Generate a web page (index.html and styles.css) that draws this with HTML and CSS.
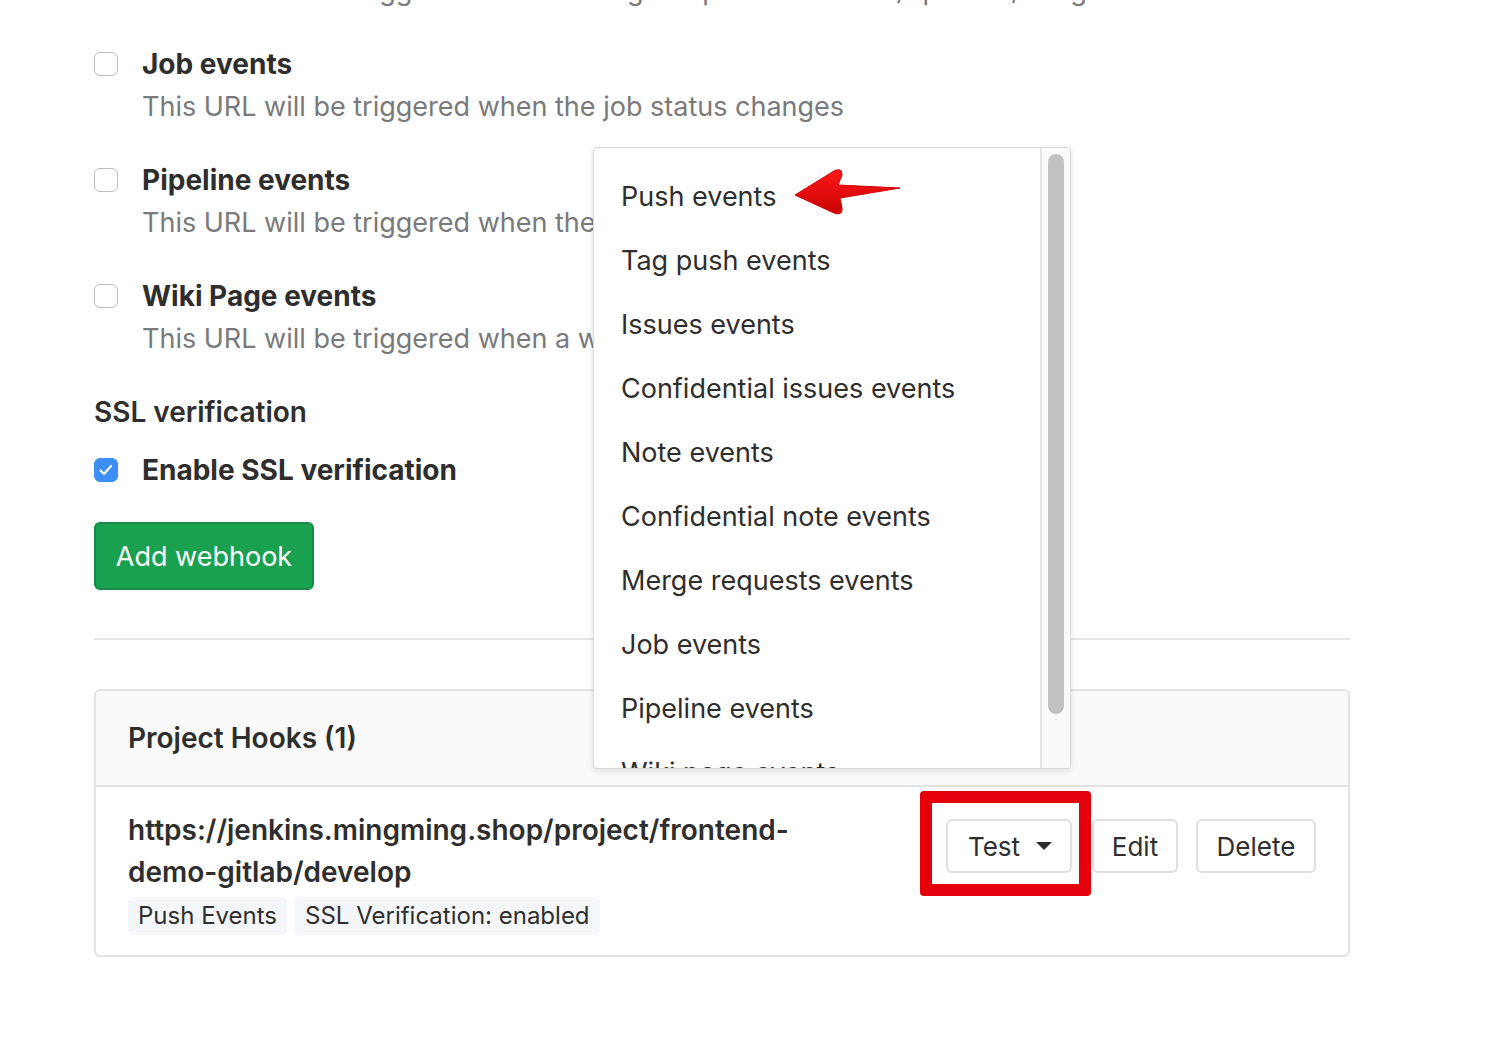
FILE: index.html
```html
<!DOCTYPE html>
<html>
<head>
<meta charset="utf-8">
<link rel="stylesheet" href="styles.css">
</head>
<body>
<div class="page">
  <p class="desc first">This URL will be triggered when a merge request is created/updated/merged</p>

  <div class="opt">
    <div class="opt-row"><span class="cb"></span><span class="opt-label">Job events</span></div>
    <p class="desc">This URL will be triggered when the job status changes</p>
  </div>
  <div class="opt">
    <div class="opt-row"><span class="cb"></span><span class="opt-label">Pipeline events</span></div>
    <p class="desc">This URL will be triggered when the pipeline status changes</p>
  </div>
  <div class="opt">
    <div class="opt-row"><span class="cb"></span><span class="opt-label">Wiki Page events</span></div>
    <p class="desc">This URL will be triggered when a wiki page is created/updated</p>
  </div>

  <h4 class="section-title">SSL verification</h4>
  <div class="opt-row ssl"><span class="cb checked"><svg viewBox="0 0 24 24" width="24" height="24"><path d="M6.5 12.5l3.5 3.5 7-8" fill="none" stroke="#fff" stroke-width="2.2" stroke-linecap="round" stroke-linejoin="round"/></svg></span><span class="opt-label">Enable SSL verification</span></div>

  <button class="btn-add">Add webhook</button>

  <hr class="divider">

  <div class="card">
    <div class="card-header">Project Hooks (1)</div>
    <div class="card-body">
      <div class="hook-info">
        <div class="hook-url">https://jenkins.mingming.shop/project/frontend-demo-gitlab/develop</div>
        <div class="badges">
          <span class="badge">Push Events</span>
          <span class="badge">SSL Verification: enabled</span>
        </div>
      </div>
      <div class="hook-actions">
        <button class="btn btn-test">Test <span class="caret"></span></button>
        <button class="btn btn-edit">Edit</button>
        <button class="btn btn-delete">Delete</button>
      </div>
    </div>
  </div>

  <div class="highlight-box"></div>

  <div class="dropdown">
    <ul class="dd-list">
      <li>Push events</li>
      <li>Tag push events</li>
      <li>Issues events</li>
      <li>Confidential issues events</li>
      <li>Note events</li>
      <li>Confidential note events</li>
      <li>Merge requests events</li>
      <li>Job events</li>
      <li>Pipeline events</li>
      <li>Wiki page events</li>
    </ul>
    <div class="dd-scroll"><div class="dd-thumb"></div></div>
  </div>

  <svg class="arrow" viewBox="0 0 115 55" width="115" height="55">
    <defs>
      <linearGradient id="ag" x1="0" y1="0" x2="0" y2="1">
        <stop offset="0" stop-color="#ff1a1a"/>
        <stop offset="1" stop-color="#c80000"/>
      </linearGradient>
    </defs>
    <path d="M5 30 L44 6 Q52 2 52 10 L48 20 L110 23 L50 33 L52 43 Q53 51 44 48 Z" fill="url(#ag)" stroke="#d00000" stroke-width="1" stroke-linejoin="round"/>
  </svg>
</div>
</body>
</html>
```

FILE: styles.css
```css
* { box-sizing: border-box; }
html, body { margin: 0; padding: 0; background: #fff; }
body {
  font-family: Inter, "Noto Sans", "Liberation Sans", sans-serif;
  color: #2e2e2e;
  overflow: hidden;
  height: 1048px;
}
.page {
  position: relative;
  display: flow-root;
  padding-left: 94px;
  width: 1350px;
}
.desc {
  margin: 0 0 32px 48px;
  font-size: 27px;
  line-height: 42px;
  color: #7a7a7a;
  white-space: nowrap;
  position: relative;
  top: 1px;
}
.desc.first { margin-top: -31px; }
.opt-row {
  display: flex;
  align-items: center;
  height: 42px;
}
.cb {
  width: 24px;
  height: 24px;
  border: 1.5px solid #bdbdbd;
  border-radius: 6px;
  background: #fff;
  margin-right: 24px;
  flex: none;
  display: flex;
}
.cb.checked {
  background: #3b8ff6;
  border-color: #3b8ff6;
}
.cb.checked svg { margin: -1.5px; }
.opt-label {
  font-size: 28px;
  font-weight: 700;
  line-height: 42px;
  color: #2e2e2e;
}
.section-title {
  margin: 0 0 16px 0;
  font-size: 28px;
  font-weight: 600;
  line-height: 42px;
}
.ssl { margin-bottom: 31px; }
.btn-add {
  display: block;
  height: 68px;
  width: 220px;
  background: #1aa150;
  border: 2px solid #168a44;
  border-radius: 6px;
  color: #fff;
  font-family: inherit;
  font-size: 27px;
  padding: 0;
}
.divider {
  margin: 48px 0 49px 0;
  border: 0;
  border-top: 2px solid #e5e5e5;
  width: 1256px;
}
.card {
  width: 1256px;
  border: 2px solid #e3e3e3;
  border-radius: 6px;
}
.card-header {
  height: 96px;
  background: #fafafa;
  border-bottom: 2px solid #e3e3e3;
  padding-left: 32px;
  display: flex;
  align-items: center;
  font-size: 28px;
  font-weight: 600;
  border-radius: 6px 6px 0 0;
}
.card-body {
  display: flex;
  justify-content: space-between;
  align-items: flex-start;
  padding: 22px 32px 20px 32px;
}
.hook-url {
  width: 720px;
  font-size: 28px;
  font-weight: 600;
  line-height: 42px;
}
.badges {
  display: flex;
  gap: 8px;
  margin-top: 4px;
}
.badge {
  background: #f4f6f9;
  border-radius: 5px;
  padding: 0 10px;
  height: 38px;
  line-height: 38px;
  font-size: 24px;
  color: #2e2e2e;
}
.hook-actions {
  display: flex;
  margin-top: 10px;
}
.btn {
  height: 54px;
  background: #fff;
  border: 2px solid #e0e0e0;
  border-radius: 6px;
  font-family: inherit;
  font-size: 26px;
  color: #2e2e2e;
  padding: 0;
  display: flex;
  align-items: center;
  justify-content: center;
}
.btn-test { width: 126px; margin-right: 20px; padding-left: 2px; }
.btn-edit { width: 86px; margin-right: 18px; }
.btn-delete { width: 120px; }
.caret {
  display: inline-block;
  width: 0;
  height: 0;
  border-left: 8px solid transparent;
  border-right: 8px solid transparent;
  border-top: 8px solid #2e2e2e;
  margin-left: 16px;
}
.highlight-box {
  position: absolute;
  left: 920px;
  top: 791px;
  width: 171px;
  height: 105px;
  border: 12px solid #e3000b;
  border-radius: 4px;
}
.dropdown {
  position: absolute;
  left: 593px;
  top: 147px;
  width: 478px;
  height: 622px;
  background: #fff;
  border: 1px solid #dadada;
  border-radius: 4px;
  box-shadow: 0 2px 6px rgba(0,0,0,0.12);
  overflow: hidden;
  display: flex;
}
.dd-list {
  list-style: none;
  margin: 0;
  padding: 17px 0 0 0;
  flex: 1;
}
.dd-list li {
  height: 64px;
  line-height: 64px;
  padding-left: 27px;
  font-size: 27px;
  color: #2e2e2e;
  white-space: nowrap;
}
.dd-scroll {
  width: 30px;
  flex: none;
  border-left: 2px solid #e6e6e6;
  background: #fafafa;
  padding: 6px 0 0 6px;
}
.dd-thumb {
  width: 16px;
  height: 560px;
  border-radius: 8px;
  background: #c1c1c1;
}
.arrow {
  position: absolute;
  left: 790px;
  top: 165px;
}
```
